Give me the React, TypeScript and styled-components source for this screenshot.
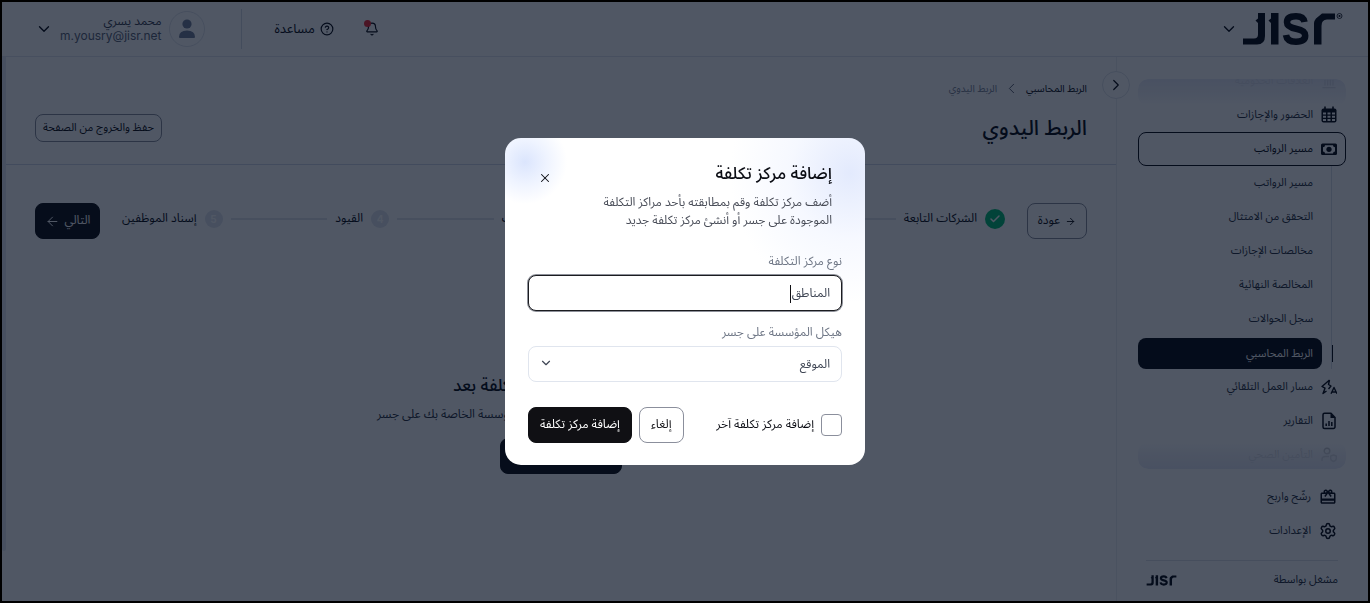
import React, { useState } from "react";
import styled, { createGlobalStyle, css } from "styled-components";
import {
  ArrowLeft,
  ArrowRight,
  Bell,
  Check,
  ChevronDown,
  ChevronLeft,
  ChevronRight,
  CircleHelp,
  Landmark,
  Settings,
  X,
} from "lucide-react";
import { MdOutlineCardGiftcard } from "react-icons/md";

const ink = "#0b0d14";
const arabic = `"Noto Sans Arabic", "DejaVu Sans Condensed", "DejaVu Sans", sans-serif`;

const GlobalStyle = createGlobalStyle`
  *, *::before, *::after { box-sizing: border-box; }
  body { margin: 0; background: #fff; }
  body, button, input, select { font-family: ${arabic}; color: ${ink}; }
  h1, h2, p, ul, ol { margin: 0; padding: 0; }
  ul, ol { list-style: none; }
  a { color: inherit; text-decoration: none; }
  button { cursor: pointer; }
  svg { display: block; flex: none; }
`;

const Frame = styled.div`
  display: flex;
  flex-direction: column;
  min-height: 100vh;
  border: 2px solid #000;
  font-size: 12px;
  line-height: 16px;
`;

/* Top bar */

const TopBar = styled.header`
  display: flex;
  align-items: center;
  height: 55px;
  padding: 0 25px 0 33px;
  border-bottom: 1px solid #e1e5ee;
`;

const PlainButton = styled.button`
  display: flex;
  align-items: center;
  gap: ${(p: { $gap?: number }) => p.$gap ?? 0}px;
  padding: 0;
  border: 0;
  background: none;
  font-size: 13px;
  line-height: 16px;
`;

const BellButton = styled(PlainButton)`
  position: relative;
  margin-inline-start: auto;
  margin-inline-end: 31px;
`;

const AlertDot = styled.span`
  position: absolute;
  top: -2px;
  left: -1px;
  width: 7px;
  height: 7px;
  border-radius: 50%;
  background: #ef2b35;
`;

const TopDivider = styled.span`
  width: 1px;
  height: 40px;
  margin: 0 33px 0 36px;
  background: #d5dae4;
`;

const Avatar = styled.span`
  display: grid;
  place-items: center;
  width: 36px;
  height: 36px;
  border: 1px solid #dfe3ea;
  border-radius: 50%;
`;

const Account = styled.span`
  display: flex;
  flex-direction: column;
  align-items: flex-start;
  font-size: 12px;
  line-height: 14px;
  color: #3b4252;
`;

const Email = styled.span`
  font-family: "Inter", sans-serif;
  color: #5d6678;
`;

/* Body */

const Body = styled.div`
  display: flex;
  flex: 1;
`;

const Sidebar = styled.aside`
  position: relative;
  flex: none;
  width: 252px;
  padding: 22px 22px 0 21px;
  border-left: 1px solid #eceef3;
`;

const CollapseButton = styled.button`
  position: absolute;
  top: 14px;
  left: -15px;
  display: grid;
  place-items: center;
  width: 28px;
  height: 28px;
  padding: 0;
  border: 1px solid #dfe3ea;
  border-radius: 50%;
  background: #fff;
`;

const NavViewport = styled.div`
  position: relative;
  height: 390px;
  overflow: hidden;
  border-radius: 10px;
`;

const NavScroll = styled.ul`
  margin-top: -15px;
`;

const Fade = styled.div<{ $edge: "top" | "bottom" }>`
  position: absolute;
  left: 0;
  right: 0;
  ${(p) => p.$edge}: 0;
  height: 27px;
  border-radius: 10px;
  background: linear-gradient(
    to ${(p) => p.$edge},
    rgba(255, 255, 255, 0.7),
    rgba(240, 242, 249, 0.9) 50%,
    rgba(230, 233, 246, 0.94)
  );
  pointer-events: none;
`;

const NavLink = styled.a<{ $open?: boolean }>`
  display: flex;
  align-items: center;
  gap: 8px;
  height: 34px;
  padding: 0 8px;
  border: 1px solid ${(p) => (p.$open ? ink : "transparent")};
  border-radius: 8px;
  color: ${(p) => (p.$open ? ink : "#2b3240")};
  font-size: 11px;
  svg {
    color: ${ink};
  }
`;

const SubList = styled.ul`
  margin-inline-start: 14px;
  padding-inline-start: 9px;
  border-inline-start: 1px solid #d9dee7;
`;

const SubLink = styled.a<{ $active?: boolean }>`
  position: relative;
  display: flex;
  align-items: center;
  height: 34px;
  padding: 0 9px;
  color: #2b3240;
  font-size: 11px;
  ${(p) =>
    p.$active &&
    css`
      height: 31px;
      margin: 2px 0 1px;
      border-radius: 8px;
      background: ${ink};
      color: #fff;
      &::before {
        content: "";
        position: absolute;
        top: 7px;
        right: -11px;
        width: 1px;
        height: 17px;
        background: ${ink};
      }
    `}
`;

const FixedNav = styled.ul`
  margin-top: 11px;
`;

const PoweredBy = styled.div`
  display: flex;
  align-items: center;
  justify-content: space-between;
  margin: 12px 8px 0;
  padding: 11px 0 12px;
  border-top: 1px solid #dde1e9;
  color: #2b3240;
  font-size: 11px;
`;

const Main = styled.main`
  flex: 1;
  min-width: 0;
`;

const ScrollTrack = styled.div`
  width: 4px;
  padding-bottom: 50px;
`;

const ScrollThumb = styled.div`
  height: 100%;
  border-radius: 0 0 4px 4px;
  background: #e4e8f0;
`;

const PageHead = styled.div`
  padding: 23px 29px 18px;
  border-bottom: 1px solid #d3d9e8;
`;

const Breadcrumb = styled.nav`
  display: flex;
  align-items: center;
  gap: 6px;
  font-size: 10px;
  svg {
    color: #4d5566;
  }
`;

const Muted = styled.span`
  color: #7d8596;
`;

const TitleRow = styled.div`
  display: flex;
  align-items: center;
  justify-content: space-between;
  margin-top: 13px;
`;

const PageTitle = styled.h1`
  font-size: 21px;
  line-height: 36px;
  font-weight: 500;
`;

const Button = styled.button<{ $solid?: boolean; $small?: boolean }>`
  display: flex;
  align-items: center;
  justify-content: center;
  gap: 5px;
  height: ${(p) => (p.$small ? 28 : 36)}px;
  padding: 0 ${(p) => (p.$small ? 7 : 11)}px;
  border: 1px solid ${(p) => (p.$solid ? "#101014" : "#8b8f9c")};
  border-radius: 8px;
  background: ${(p) => (p.$solid ? "#101014" : "transparent")};
  color: ${(p) => (p.$solid ? "#fff" : "#101014")};
  font-size: ${(p) => (p.$small ? 11 : 12)}px;
  line-height: 16px;
  white-space: nowrap;
`;

const NextButton = styled(Button)`
  width: 65px;
`;

const BackButton = styled(Button)`
  width: 60px;
`;

const StepperRow = styled.div`
  display: flex;
  align-items: center;
  gap: 22px;
  padding: 38px 29px 0;
`;

const Steps = styled.ol`
  display: flex;
  align-items: center;
  flex: 1;
  gap: 8px;
  height: 32px;
  align-self: flex-start;
`;

const Step = styled.li`
  display: flex;
  align-items: center;
  gap: 8px;
  font-size: 12px;
  white-space: nowrap;
`;

const StepLine = styled.li`
  flex: 1;
  height: 2px;
  background: #e1e5ec;
`;

const StepBadge = styled.span<{ $done?: boolean }>`
  display: grid;
  place-items: center;
  width: ${(p) => (p.$done ? 20 : 18)}px;
  height: ${(p) => (p.$done ? 20 : 18)}px;
  border-radius: 50%;
  background: ${(p) => (p.$done ? "#05bd74" : "#e1e5ee")};
  color: #fff;
  font: 700 10px/18px "Inter", sans-serif;
`;

const Empty = styled.section`
  display: flex;
  flex-direction: column;
  align-items: center;
  padding: 135px 29px 0;
  text-align: center;
`;

const EmptyTitle = styled.h2`
  font-size: 17px;
  line-height: 24px;
  font-weight: 500;
`;

const EmptyText = styled.p`
  margin: 9px 0 15px;
  font-size: 12px;
  color: #2b3240;
`;

const EmptyButton = styled(Button)`
  width: 122px;
`;

/* Dialog */

const Overlay = styled.div`
  position: fixed;
  inset: 2px;
  display: flex;
  align-items: center;
  justify-content: center;
  background: rgba(1, 11, 30, 0.69);
`;

const Dialog = styled.form`
  width: 360px;
  padding: 22px 23px;
  border-radius: 16px;
  background:
    radial-gradient(circle at 20px 24px, #dbe5fd, rgba(232, 239, 255, 0.7) 22px, rgba(255, 255, 255, 0) 42px),
    radial-gradient(ellipse 120px 130px at 345px 35px, #e3eafd, rgba(240, 244, 255, 0.6) 50%, rgba(255, 255, 255, 0)),
    #fff;
  font-size: 12px;
  line-height: 18px;
`;

const DialogHead = styled.div`
  display: flex;
  justify-content: space-between;
  align-items: flex-start;
  padding: 0 10px;
`;

const DialogTitle = styled.h2`
  font-size: 17px;
  line-height: 28px;
  font-weight: 500;
`;

const DialogText = styled.p`
  width: 232px;
  margin-top: 6px;
  color: #494d58;
`;

const CloseButton = styled.button`
  display: grid;
  place-items: center;
  width: 14px;
  height: 14px;
  margin-top: 11px;
  padding: 0;
  border: 0;
  background: none;
`;

const Field = styled.div`
  display: flex;
  flex-direction: column;
  gap: 4px;
  margin-top: 13px;
`;

const FirstField = styled(Field)`
  margin-top: 23px;
`;

const Label = styled.label`
  line-height: 18px;
  color: #6f7786;
`;

const Control = styled.div`
  position: relative;
`;

const box = css`
  display: block;
  width: 100%;
  height: 36px;
  padding: 0 11px;
  border-radius: 8px;
  background: #fff;
  font-size: 12px;
  color: #3f4654;
  outline: 0;
`;

const TextInput = styled.input`
  ${box}
  border: 1px solid #1b1c20;
  box-shadow: 0 0 0 1px #8d9099;
`;

const Caret = styled.span`
  position: absolute;
  top: 10px;
  right: 51px;
  width: 1px;
  height: 18px;
  background: #101014;
`;

const Select = styled.select`
  ${box}
  appearance: none;
  border: 1px solid #e0e5ee;
`;

const SelectArrow = styled(ChevronDown)`
  position: absolute;
  top: 10px;
  left: 11px;
  pointer-events: none;
  color: #3f4654;
`;

const DialogFoot = styled.div`
  display: flex;
  align-items: center;
  gap: 7px;
  margin-top: 25px;
`;

const CheckLabel = styled.label`
  display: flex;
  align-items: center;
  gap: 7px;
  margin-inline-end: auto;
`;

const Checkbox = styled.input`
  appearance: none;
  width: 21px;
  height: 22px;
  margin: 0;
  border: 1px solid #8b8f9c;
  border-radius: 4px;
  background: #fff;
  &:checked {
    background: #101014;
  }
`;

/* Drawings */

function Logo({ width, mark }: { width: number; mark?: boolean }) {
  const w = mark ? 100 : 92;
  return (
    <svg width={width} height={Math.round((width * 34) / w)} viewBox={`0 0 ${w} 34`} fill="#0b0d14" role="img" aria-label="Jisr">
      <path d="M15 1H22V24Q22 32.5 14 32.5H0V26.5H11Q15 26.5 15 22.5V11L12.5 8.5L15 6.5Z" />
      <path d="M28 1H35.500V32.500H28V11L25.500 8.500L28 6.500Z" />
      <path d="M61.500 10Q60.500 4.300 53 4.300Q44 4.300 44 10.300Q44 15.200 53 16.700Q62.200 18.300 62.200 23.500Q62.200 29.700 53 29.700Q44 29.700 43 23" fill="none" stroke="#0b0d14" strokeWidth="6.500" />
      <path d="M71 32.500V11Q71 9 73 6.500L79 1.500H92V7.500H84Q78.500 7.500 78.500 14V32.500Z" />
      {mark && (
        <>
          <circle cx="96.500" cy="4" r="2.500" fill="none" stroke="#0b0d14" strokeWidth="0.800" />
          <circle cx="96.500" cy="4" r="1" />
        </>
      )}
    </svg>
  );
}

const CalendarIcon = () => (
  <svg width="16" height="18" viewBox="0 0 16 18">
    <path d="M4 0.500V4M12 0.500V4" stroke="currentColor" strokeWidth="1.600" />
    <rect x="0.500" y="2.500" width="15" height="14" rx="2" fill="currentColor" />
    <path
      d="M2 7.500h3M6.500 7.500h3M11 7.500h3M2 10.700h3M6.500 10.700h3M11 10.700h3M2 13.900h3M6.500 13.900h3M11 13.900h3"
      stroke="#fff"
      strokeWidth="2"
    />
  </svg>
);

const BanknoteIcon = () => (
  <svg width="16" height="16" viewBox="0 0 16 16">
    <rect x="0" y="2.500" width="16" height="11.500" rx="1.500" fill="currentColor" />
    <path d="M4 4.200h8a2 2 0 0 0 2 2v4.200a2 2 0 0 0-2 2H4a2 2 0 0 0-2-2V6.200a2 2 0 0 0 2-2z" fill="#fff" />
    <circle cx="8" cy="8.300" r="2.600" fill="currentColor" />
  </svg>
);

const AutomationIcon = () => (
  <svg width="16" height="16" viewBox="0 0 16 16" fill="none" stroke="currentColor" strokeWidth="1.400" strokeLinejoin="round">
    <path d="M8.500 1L1 7.500l3 1.700L2 14.500l3.500-2.500M8.500 1L7.500 5.500 10 7 7.500 10" />
    <path d="M10 14.800L13 8.500l3 6.300M11 13h4" />
  </svg>
);

const ReportIcon = () => (
  <svg width="16" height="18" viewBox="0 0 16 18" fill="none" stroke="currentColor" strokeWidth="1.500">
    <path d="M3.500 1.200H10L14 5.500V15a1.500 1.500 0 0 1-1.500 1.500h-9A1.500 1.500 0 0 1 2 15V2.700a1.500 1.500 0 0 1 1.500-1.500z" strokeLinejoin="round" />
    <path d="M9.500 1v5h5z" fill="currentColor" stroke="none" />
    <path d="M5.200 14v-2.500M8 14V9M10.800 14v-4" />
  </svg>
);

const InsuranceIcon = () => (
  <svg width="16" height="16" viewBox="0 0 16 16" fill="none" stroke="currentColor" strokeWidth="1.400">
    <circle cx="6" cy="4" r="2.800" />
    <path d="M1 14v-1.500Q1 9.500 4.500 9.500H8" />
    <path d="M12.500 8l2.800 1v2.500q0 2-2.800 3-2.800-1-2.800-3V9z" />
  </svg>
);

const PersonIcon = () => (
  <svg width="18" height="20" viewBox="0 0 18 20" fill="#75809a">
    <circle cx="9" cy="5" r="4.600" />
    <path d="M1 18q0-6.500 8-6.500t8 6.500q0 1-1 1H2q-1 0-1-1z" />
  </svg>
);

const subItems = [
  "مسير الرواتب",
  "التحقق من الامتثال",
  "مخالصات الإجازات",
  "المخالصة النهائية",
  "سجل الحوالات",
  "الربط المحاسبي",
];

const steps = ["الشركات التابعة", "مراكز التكلفة", "ربط الحسابات", "القيود", "إسناد الموظفين"];

function NavItem({ icon, label, open }: { icon: React.ReactNode; label: string; open?: boolean }) {
  return (
    <NavLink href="#" $open={open}>
      {icon}
      {label}
    </NavLink>
  );
}

function AddCostCenter() {
  const [name, setName] = useState("المناطق");
  return (
    <Overlay>
      <Dialog role="dialog" aria-labelledby="dialog-title" onSubmit={(e) => e.preventDefault()}>
        <DialogHead>
          <div>
            <DialogTitle id="dialog-title">إضافة مركز تكلفة</DialogTitle>
            <DialogText>أضف مركز تكلفة وقم بمطابقته بأحد مراكز التكلفة الموجودة على جسر أو أنشئ مركز تكلفة جديد</DialogText>
          </div>
          <CloseButton type="button" aria-label="إغلاق">
            <X size={14} strokeWidth={1.8} />
          </CloseButton>
        </DialogHead>
        <FirstField>
          <Label htmlFor="type">نوع مركز التكلفة</Label>
          <Control>
            <TextInput id="type" value={name} onChange={(e) => setName(e.target.value)} />
            <Caret />
          </Control>
        </FirstField>
        <Field>
          <Label htmlFor="structure">هيكل المؤسسة على جسر</Label>
          <Control>
            <Select id="structure" defaultValue="location">
              <option value="location">الموقع</option>
            </Select>
            <SelectArrow size={14} />
          </Control>
        </Field>
        <DialogFoot>
          <CheckLabel>
            <Checkbox type="checkbox" />
            إضافة مركز تكلفة آخر
          </CheckLabel>
          <Button type="button">إلغاء</Button>
          <Button type="submit" $solid>
            إضافة مركز تكلفة
          </Button>
        </DialogFoot>
      </Dialog>
    </Overlay>
  );
}

export default function App() {
  return (
    <Frame dir="rtl" lang="ar">
      <GlobalStyle />
      <TopBar>
        <PlainButton $gap={5} aria-label="Jisr">
          <Logo width={100} mark />
          <ChevronDown size={18} strokeWidth={1.8} />
        </PlainButton>
        <BellButton aria-label="الإشعارات">
          <Bell size={14} />
          <AlertDot />
        </BellButton>
        <PlainButton $gap={5}>
          <CircleHelp size={14} />
          مساعدة
        </PlainButton>
        <TopDivider />
        <PlainButton $gap={7}>
          <Avatar>
            <PersonIcon />
          </Avatar>
          <Account>
            <span>محمد يسري</span>
            <Email dir="ltr">m.yousry@jisr.net</Email>
          </Account>
          <ChevronDown size={18} strokeWidth={1.8} />
        </PlainButton>
      </TopBar>
      <Body>
        <Sidebar>
          <CollapseButton aria-label="طي القائمة">
            <ChevronRight size={18} strokeWidth={1.6} />
          </CollapseButton>
          <NavViewport>
            <NavScroll>
              <li>
                <NavItem icon={<Landmark size={16} />} label="العلاقات الحكومية" />
              </li>
              <li>
                <NavItem icon={<CalendarIcon />} label="الحضور والإجازات" />
              </li>
              <li>
                <NavItem icon={<BanknoteIcon />} label="مسير الرواتب" open />
                <SubList>
                  {subItems.map((label, i) => (
                    <li key={label}>
                      <SubLink href="#" $active={i === subItems.length - 1}>
                        {label}
                      </SubLink>
                    </li>
                  ))}
                </SubList>
              </li>
              <li>
                <NavItem icon={<AutomationIcon />} label="مسار العمل التلقائي" />
              </li>
              <li>
                <NavItem icon={<ReportIcon />} label="التقارير" />
              </li>
              <li>
                <NavItem icon={<InsuranceIcon />} label="التأمين الصحي" />
              </li>
            </NavScroll>
            <Fade $edge="top" />
            <Fade $edge="bottom" />
          </NavViewport>
          <FixedNav>
            <li>
              <NavItem icon={<MdOutlineCardGiftcard size={18} />} label="رشّح واربح" />
            </li>
            <li>
              <NavItem icon={<Settings size={18} />} label="الإعدادات" />
            </li>
          </FixedNav>
          <PoweredBy>
            مشغل بواسطة
            <Logo width={31} />
          </PoweredBy>
        </Sidebar>
        <Main>
          <PageHead>
            <Breadcrumb>
              <a href="#">الربط المحاسبي</a>
              <ChevronLeft size={17} strokeWidth={1.3} />
              <Muted>الربط اليدوي</Muted>
            </Breadcrumb>
            <TitleRow>
              <PageTitle>الربط اليدوي</PageTitle>
              <Button $small>حفظ والخروج من الصفحة</Button>
            </TitleRow>
          </PageHead>
          <StepperRow>
            <BackButton>
              <ArrowRight size={11} />
              عودة
            </BackButton>
            <Steps>
              {steps.map((label, i) => (
                <React.Fragment key={label}>
                  {i > 0 && <StepLine aria-hidden />}
                  <Step>
                    <StepBadge $done={i === 0}>{i === 0 ? <Check size={12} strokeWidth={3} /> : i + 1}</StepBadge>
                    {label}
                  </Step>
                </React.Fragment>
              ))}
            </Steps>
            <NextButton $solid>
              التالي
              <ArrowLeft size={15} strokeWidth={1.6} />
            </NextButton>
          </StepperRow>
          <Empty>
            <EmptyTitle>لم تتم إضافة أي مراكز تكلفة بعد</EmptyTitle>
            <EmptyText>يمكنك إضافة مراكز التكلفة ومطابقتها مع هيكل المؤسسة الخاصة بك على جسر</EmptyText>
            <EmptyButton $solid>إضافة مركز تكلفة</EmptyButton>
          </Empty>
        </Main>
        <ScrollTrack>
          <ScrollThumb />
        </ScrollTrack>
      </Body>
      <AddCostCenter />
    </Frame>
  );
}
